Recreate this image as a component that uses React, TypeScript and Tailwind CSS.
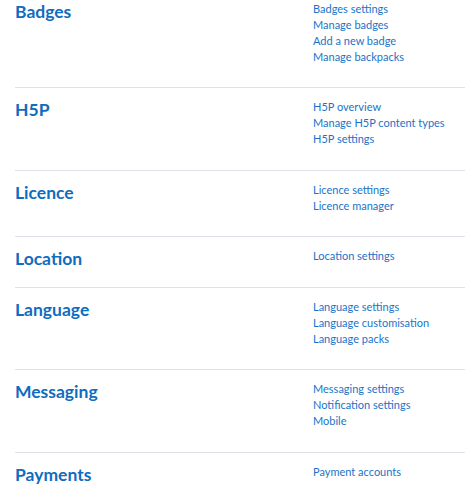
const sections = [
  { title: 'Badges', links: ['Badges settings', 'Manage badges', 'Add a new badge', 'Manage backpacks'] },
  { title: 'H5P', links: ['H5P overview', 'Manage H5P content types', 'H5P settings'] },
  { title: 'Licence', links: ['Licence settings', 'Licence manager'] },
  { title: 'Location', links: ['Location settings'] },
  { title: 'Language', links: ['Language settings', 'Language customisation', 'Language packs'] },
  { title: 'Messaging', links: ['Messaging settings', 'Notification settings', 'Mobile'] },
  { title: 'Payments', links: ['Payment accounts'] },
];

export default function App() {
  return (
    <div className="w-[465px] h-[489px] overflow-hidden bg-white pl-[15px] font-['Lato',sans-serif]">
      {sections.map((s, i) => (
        <div
          key={s.title}
          className={`flex ${i === 0 ? 'pt-[0.5px]' : 'border-t border-[#dee2e6] pt-[11px]'} pb-[22.5px]`}
        >
          <h2 className="w-[298px] shrink-0 text-[17.5px] leading-[16px] font-bold text-[#0f6cbf] mt-[3px] -mb-[3px]">
            {s.title}
          </h2>
          <ul className="flex flex-col text-[11px] leading-[16px]">
            {s.links.map((l) => (
              <li key={l}>
                <a href="#" className="text-[#1a73c8]">
                  {l}
                </a>
              </li>
            ))}
          </ul>
        </div>
      ))}
    </div>
  );
}
